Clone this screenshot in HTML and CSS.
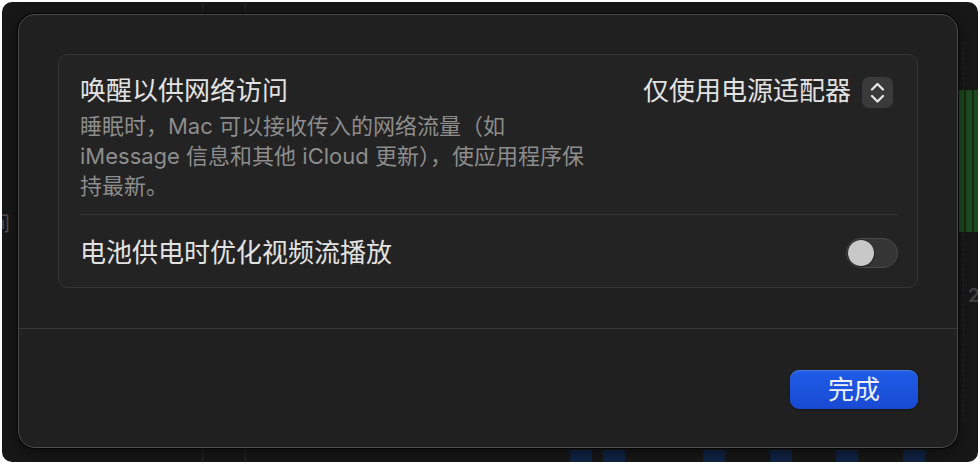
FILE: index.html
```html
<!DOCTYPE html>
<html lang="zh-CN">
<head>
<meta charset="utf-8">
<title>唤醒以供网络访问</title>
<link rel="stylesheet" href="styles.css">
</head>
<body>
<div class="window">
  <div class="bg-line bg-line-a"></div>
  <div class="bg-line bg-line-b"></div>
  <div class="bg-dash"></div>
  <div class="bg-green"></div>
  <span class="bg-char">间</span>
  <span class="bg-num">2</span>
  <div class="bg-blocks">
    <span class="bg-block b1"></span>
    <span class="bg-block b2"></span>
    <span class="bg-block b3"></span>
    <span class="bg-block b4"></span>
    <span class="bg-block b5"></span>
    <span class="bg-block b6"></span>
  </div>

  <div class="sheet">
    <div class="sheet-body">
      <div class="group">
        <div class="row row-wake">
          <div class="row-text">
            <div class="title">唤醒以供网络访问</div>
            <div class="desc">睡眠时，Mac 可以接收传入的网络流量（如<br>iMessage 信息和其他 iCloud 更新），使应用程序保<br>持最新。</div>
          </div>
          <div class="popup">
            <span class="popup-label">仅使用电源适配器</span>
            <span class="stepper">
              <svg width="31" height="31" viewBox="0 0 31 31" aria-hidden="true">
                <path d="M10 12.5 L15.5 7 L21 12.5" fill="none" stroke="#e6e6e6" stroke-width="2.3" stroke-linecap="round" stroke-linejoin="round"/>
                <path d="M10 19 L15.5 24.5 L21 19" fill="none" stroke="#e6e6e6" stroke-width="2.3" stroke-linecap="round" stroke-linejoin="round"/>
              </svg>
            </span>
          </div>
        </div>
        <div class="sep"></div>
        <div class="row row-video">
          <div class="title">电池供电时优化视频流播放</div>
          <div class="toggle"><span class="knob"></span></div>
        </div>
      </div>
    </div>
    <div class="sheet-footer">
      <button class="btn-done" type="button">完成</button>
    </div>
  </div>
</div>
</body>
</html>
```

FILE: styles.css
```css
* { box-sizing: border-box; }

html, body {
  margin: 0;
  padding: 0;
  background: #ffffff;
}

body {
  font-family: Inter, "Noto Sans CJK SC", sans-serif;
  width: 980px;
  height: 464px;
  overflow: hidden;
}

.window {
  position: relative;
  margin: 2px;
  width: 976px;
  height: 460px;
  border-radius: 10px;
  background: #171717;
  overflow: hidden;
}

/* background app content peeking around the sheet */
.bg-line {
  position: absolute;
  top: 0;
  bottom: 0;
  width: 1px;
  background: #252525;
}
.bg-line-a { left: 200px; }
.bg-line-b { left: 243px; }

.bg-dash {
  position: absolute;
  left: 961px;
  top: 40px;
  height: 380px;
  width: 0;
  border-left: 1px dashed #262626;
}

.bg-green {
  position: absolute;
  left: 956px;
  top: 88px;
  width: 20px;
  height: 142px;
  background: repeating-linear-gradient(90deg, #1e4a20 0 6px, #142a15 6px 8px);
}

.bg-char {
  position: absolute;
  left: -12px;
  top: 210px;
  font-size: 20px;
  line-height: 24px;
  color: #4e4e4e;
}

.bg-num {
  position: absolute;
  left: 966px;
  top: 282px;
  font-size: 19px;
  font-weight: 700;
  line-height: 24px;
  color: #3e3e3e;
}

.bg-block {
  position: absolute;
  top: 448px;
  width: 22px;
  height: 14px;
  background: #0f2344;
}
.b1 { left: 568px; }
.b2 { left: 601px; }
.b3 { left: 701px; }
.b4 { left: 768px; }
.b5 { left: 834px; }
.b6 { left: 901px; }

/* sheet dialog overlay */
.sheet {
  position: absolute;
  left: 16px;
  top: 12px;
  width: 940px;
  height: 434px;
  border-radius: 17px;
  background: #202020;
  border: 1px solid #4b4b4b;
  box-shadow: 0 0 0 1px #050505, 0 4px 14px rgba(0, 0, 0, 0.5);
  display: flex;
  flex-direction: column;
}

.sheet-body {
  padding: 39px 39px 40px 39px;
}

.group {
  height: 234px;
  border: 1px solid #343434;
  border-radius: 9px;
  background: #232323;
  display: flex;
  flex-direction: column;
}

.row {
  display: flex;
  justify-content: space-between;
  padding: 0 19px 0 21px;
}

.row-wake {
  align-items: flex-start;
  padding-top: 19px;
  padding-bottom: 13px;
}

.title {
  font-size: 26px;
  line-height: 34px;
  color: #e2e2e2;
  white-space: nowrap;
}

.desc {
  margin-top: 3px;
  font-size: 22px;
  line-height: 30px;
  color: #8d8d8d;
  white-space: nowrap;
}

.popup {
  display: flex;
  align-items: center;
  gap: 11px;
  height: 34px;
  margin-right: 5px;
}

.popup-label {
  font-size: 26px;
  line-height: 34px;
  color: #e2e2e2;
}

.stepper {
  width: 31px;
  height: 31px;
  border-radius: 7px;
  background: #3a3a3a;
  display: flex;
  margin-top: 2px;
}

.sep {
  height: 1px;
  margin: 0 19px 0 21px;
  background: #343434;
}

.row-video {
  flex: 1;
  align-items: center;
  padding-top: 3px;
}

.toggle {
  width: 52px;
  height: 30px;
  border-radius: 15px;
  background: #353535;
  border: 1px solid #4a4a4a;
  padding: 1px;
  display: flex;
  align-items: center;
}

.knob {
  width: 26px;
  height: 26px;
  border-radius: 50%;
  background: #c8c8c8;
  box-shadow: 0 0 0 0.5px rgba(0, 0, 0, 0.5), 0 1px 2px rgba(0, 0, 0, 0.4);
}

.sheet-footer {
  flex: 1;
  border-top: 1px solid #363636;
  display: flex;
  justify-content: flex-end;
  align-items: flex-start;
  padding: 41px 39px 0 0;
}

.btn-done {
  width: 128px;
  height: 39px;
  border: none;
  border-radius: 9px;
  background: linear-gradient(180deg, #1f5ce6 0%, #1849d3 100%);
  box-shadow: inset 0 1px 0 rgba(255, 255, 255, 0.18), 0 1px 2px rgba(0, 0, 0, 0.4);
  color: #eef1fb;
  font-family: Inter, "Noto Sans CJK SC", sans-serif;
  font-size: 26px;
  line-height: 39px;
  padding: 0;
  cursor: pointer;
}
```
